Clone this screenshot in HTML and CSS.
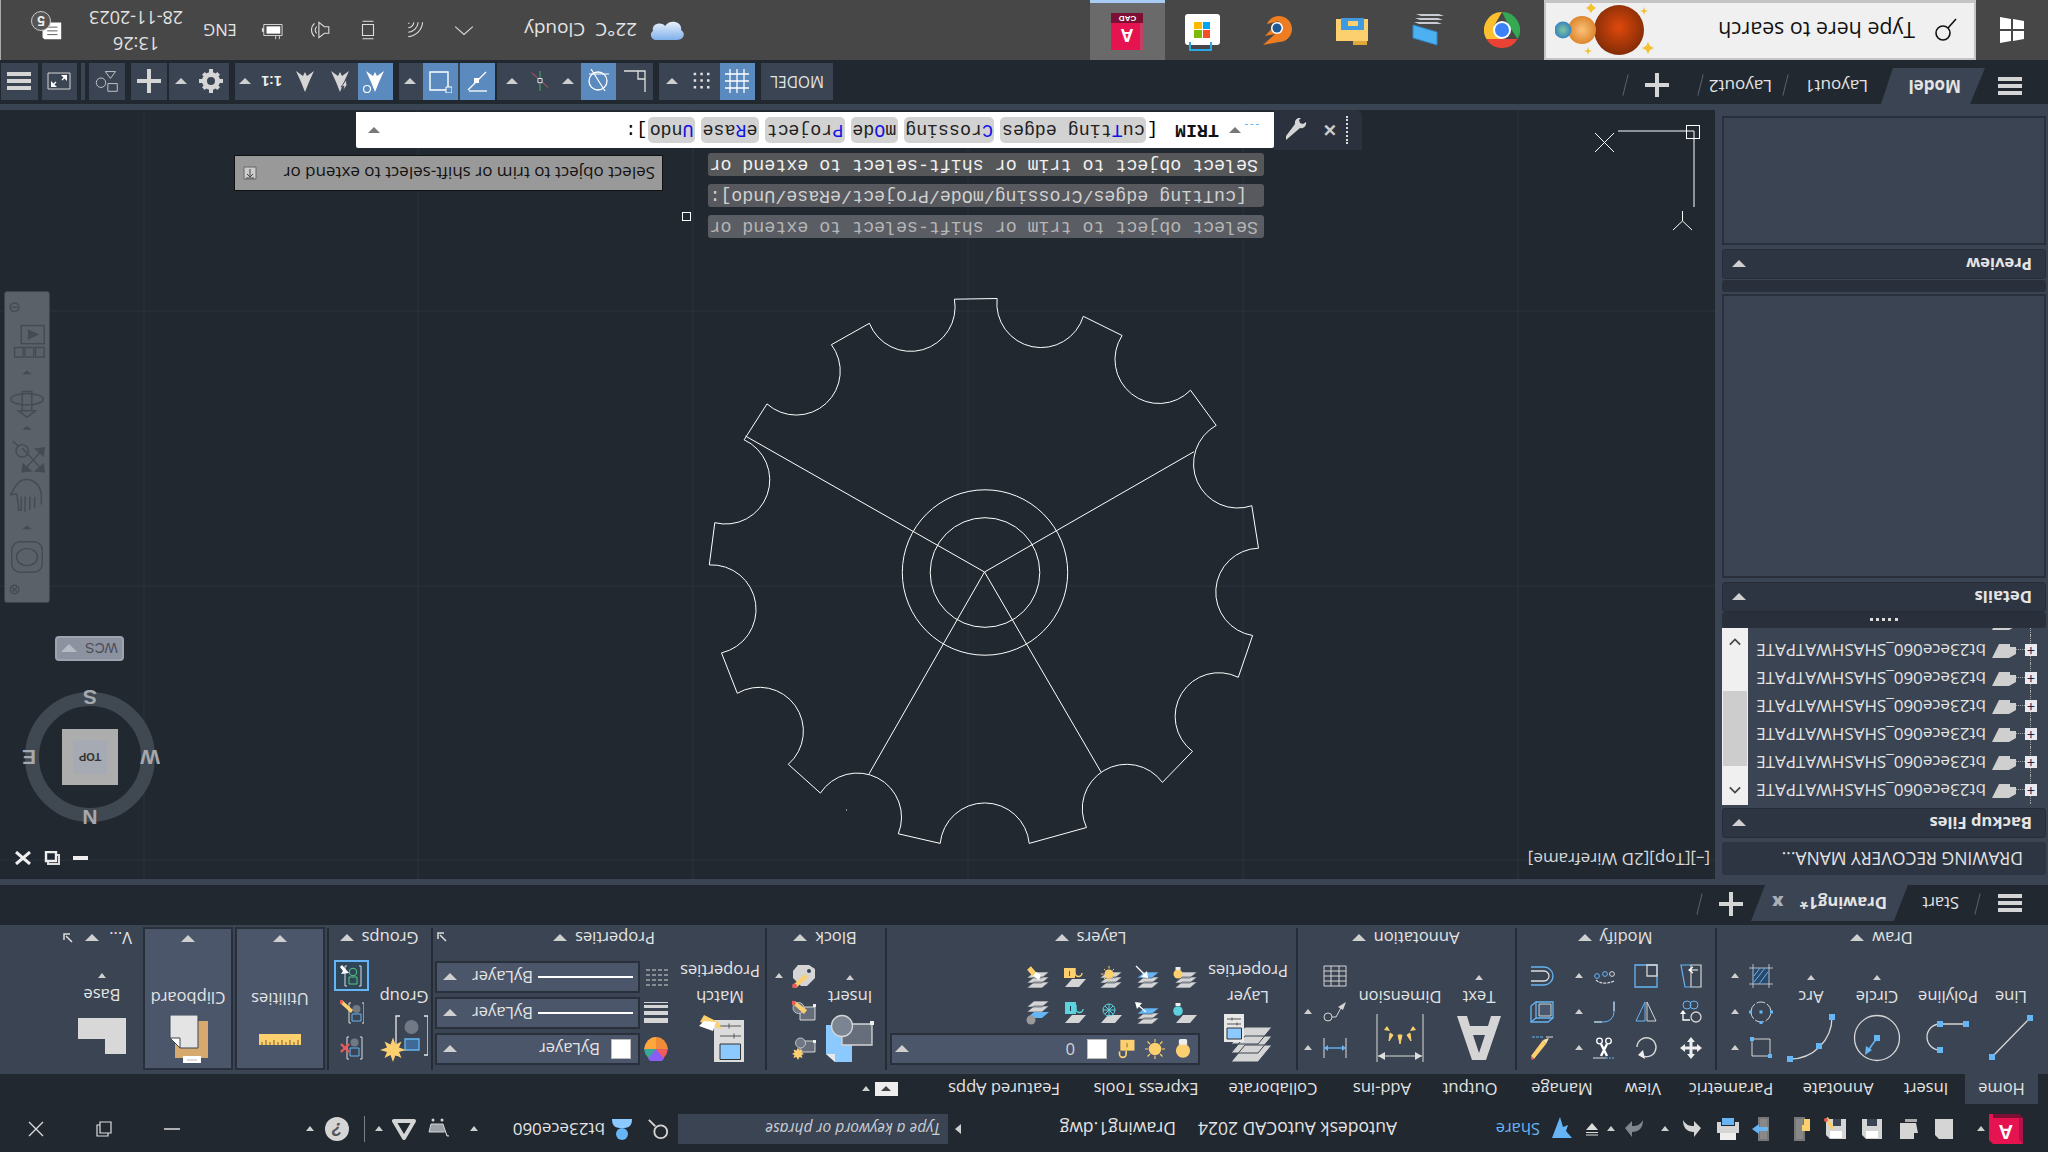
FILE: index.html
```html
<!DOCTYPE html>
<html lang="en">
<head>
<meta charset="utf-8">
<title>Autodesk AutoCAD 2024 - Drawing1.dwg</title>
<link rel="stylesheet" href="styles.css">
</head>
<body>
<svg class="defs" width="0" height="0">
  <defs>
    <radialGradient id="gBig" cx=".5" cy=".55" r=".6"><stop offset="0" stop-color="#e0480c"/><stop offset="1" stop-color="#7a2a06"/></radialGradient>
    <radialGradient id="gMid" cx=".5" cy=".5" r=".6"><stop offset="0" stop-color="#fbc27a"/><stop offset="1" stop-color="#d87a1e"/></radialGradient>
    <radialGradient id="gSmall" cx=".5" cy=".5" r=".6"><stop offset="0" stop-color="#7fc7a0"/><stop offset="1" stop-color="#2a77c4"/></radialGradient>
    <linearGradient id="gCloud" x1="0" y1="0" x2="0" y2="1"><stop offset="0" stop-color="#e8f1fb"/><stop offset="1" stop-color="#7fb0ea"/></linearGradient>
  </defs>
  <symbol id="line" viewBox="0 0 48 48"><path d="M5 44 43 5" stroke="#d5d5d5" stroke-width="1.300" fill="none"/><path d="M2 41h6v6H2zM40 2h6v6h-6z" fill="#66b5f5"/></symbol>
  <symbol id="poly" viewBox="0 0 48 48"><path d="M6 38H32A13 13 0 0 0 32 12" stroke="#d5d5d5" stroke-width="1.300" fill="none"/><path d="M3 35h6v6H3zM29 35h6v6h-6zM29 9h6v6h-6z" fill="#66b5f5"/></symbol>
  <symbol id="circ" viewBox="0 0 48 48"><circle cx="24" cy="24" r="22.500" stroke="#d5d5d5" stroke-width="1.300" fill="none"/><path d="M24 24 34 10" stroke="#66b5f5" stroke-width="1.500"/><path d="M21 21h6v6h-6z" fill="#66b5f5"/><path d="M36 7l-1 9-6-4z" fill="#66b5f5"/></symbol>
  <symbol id="arc" viewBox="0 0 48 48"><path d="M3 45A42 42 0 0 1 45 3" stroke="#d5d5d5" stroke-width="1.300" fill="none"/><path d="M0 42h6v6H0zM13 13h6v6h-6zM42 0h6v6h-6z" fill="#66b5f5"/></symbol>
  <symbol id="rect" viewBox="0 0 24 24"><path d="M3 4H21V21H3z" stroke="#d5d5d5" fill="none"/><path d="M1 2h4v4H1zM19 19h4v4h-4z" fill="#66b5f5"/></symbol>
  <symbol id="ell" viewBox="0 0 24 24"><circle cx="12" cy="12" r="10" stroke="#d5d5d5" fill="none" stroke-dasharray="9 2"/><path d="M10.500 10.500h3v3h-3zM10.500 0h3v3h-3zM21 10.500h3v3h-3zM0 10.500h3v3H0z" fill="#66b5f5"/></symbol>
  <symbol id="hatch" viewBox="0 0 24 24"><path d="M3 3H21V21H3z" fill="#29486a"/><path d="M0 4H24M0 20H24M4 0V24M20 0V24" stroke="#d5d5d5" stroke-width=".8"/><path d="M5 16 14 4M8 20 19 6M13 20 19 12" stroke="#66b5f5"/></symbol>
  <symbol id="move" viewBox="0 0 24 24"><path d="M12 1 8 6h2.500v4.500H6V8L1 12l5 4v-2.500h4.500V18H8l4 5 4-5h-2.500v-4.500H18V16l5-4-5-4v2.500h-4.500V6H16z" fill="#eee"/></symbol>
  <symbol id="rot" viewBox="0 0 24 24"><path d="M17 5A9.500 9.500 0 1 0 21 13" stroke="#d5d5d5" stroke-width="1.400" fill="none"/><path d="M13 1 20 5 15 10z" fill="#eee"/></symbol>
  <symbol id="trim" viewBox="0 0 24 24"><path d="M2 2H10" stroke="#66b5f5" stroke-dasharray="2 1"/><path d="M10 2H23" stroke="#ddd"/><path d="M9 4 15 16M15 4 9 16" stroke="#fff" stroke-width="2.400"/><circle cx="7.500" cy="19" r="2.800" fill="none" stroke="#fff" stroke-width="1.300"/><circle cx="16.500" cy="19" r="2.800" fill="none" stroke="#fff" stroke-width="1.300"/></symbol>
  <symbol id="erase" viewBox="0 0 24 24"><path d="M20 1 8 16l3 4L23 4z" fill="#fcd06f"/><path d="M8 16 5 22l6-2z" fill="#fbe2a8"/><path d="M23 1a2 2 0 0 0-3 0L23 4z" fill="#ea5a5a"/><path d="M1 23H8" stroke="#ddd"/><path d="M11 23H23" stroke="#66b5f5" stroke-dasharray="3 1"/></symbol>
  <symbol id="copy" viewBox="0 0 24 24"><circle cx="7" cy="7" r="5" fill="none" stroke="#d5d5d5" stroke-width="1.300"/><path d="M13 4H20V10" stroke="#fff" stroke-width="1.300" fill="none"/><path d="M17 10h6l-3 4z" fill="#fff"/><circle cx="9" cy="19" r="4" fill="none" stroke="#66b5f5"/><circle cx="16" cy="19" r="4" fill="none" stroke="#66b5f5"/></symbol>
  <symbol id="mirror" viewBox="0 0 24 24"><path d="M11 3H2L11 22z" fill="none" stroke="#d5d5d5"/><path d="M13 3H22L13 22z" fill="none" stroke="#66b5f5"/></symbol>
  <symbol id="fillet" viewBox="0 0 24 24"><path d="M22 2H12A10 10 0 0 0 2 12V23" stroke="#66b5f5" fill="none"/><path d="M22 2H14M2 22V13" stroke="#ddd"/></symbol>
  <symbol id="array3d" viewBox="0 0 24 24"><path d="M1 6 6 2H23V18L18 22H1z" fill="none" stroke="#66b5f5" stroke-width="1.300"/><path d="M18 22V6H1M18 6 23 2" stroke="#66b5f5" stroke-width="1.300" fill="none"/><path d="M3 8H15V20H3z" fill="#49586c" stroke="#d5d5d5"/></symbol>
  <symbol id="stretch" viewBox="0 0 24 24"><path d="M2 1H12V23H2z" fill="none" stroke="#d5d5d5" stroke-width="1.200"/><path d="M12 1H18L22 23H12" fill="none" stroke="#66b5f5" stroke-width="1.200"/><path d="M5 18H13M10 15l4 3-4 3" stroke="#fff" fill="none" stroke-width="1.200"/></symbol>
  <symbol id="scale" viewBox="0 0 24 24"><path d="M1 1H23V23H1z" fill="none" stroke="#66b5f5" stroke-width="1.300"/><path d="M11 12H1V23H11z" fill="none" stroke="#d5d5d5" stroke-width="1.300"/></symbol>
  <symbol id="array" viewBox="0 0 24 24"><path d="M2 7C8 4 16 4 20 8" stroke="#d5d5d5" stroke-width="1.200" fill="none" stroke-dasharray="3 1"/><circle cx="4" cy="14" r="2.400" fill="none" stroke="#d5d5d5"/><circle cx="11" cy="14" r="2.400" fill="none" stroke="#66b5f5"/><circle cx="19" cy="12" r="2.400" fill="none" stroke="#66b5f5"/></symbol>
  <symbol id="offset" viewBox="0 0 24 24"><path d="M23 7H10A5 5 0 0 0 10 17H23" stroke="#ddd" stroke-width="1.300" fill="none"/><path d="M23 3H10A9 9 0 0 0 10 21H23" stroke="#66b5f5" stroke-width="1.300" fill="none"/></symbol>
  <symbol id="bigA" viewBox="0 0 48 48"><path d="M17 2H31L46 46H36L33 36H15L12 46H2zM18 27H30L24 9z" fill="#d5d5d5" fill-rule="evenodd"/></symbol>
  <symbol id="dim" viewBox="0 0 48 48"><path d="M1 0V48M47 0V48M2 6H46" stroke="#ddd" fill="none"/><path d="M2 6l7-4v8zM46 6l-7-4v8z" fill="#ddd"/><path d="M24 18l-2 9h4zM13 21l1 8 3-2zM35 21l-1 8-3-2z" fill="#fcd06f" stroke="#fcd06f"/><path d="M8 32l6-1-3 5zM40 32l-6-1 3 5z" fill="#fcd06f"/></symbol>
  <symbol id="dimS" viewBox="0 0 24 24"><path d="M1 2V22M23 2V22" stroke="#ddd"/><path d="M3 12H21" stroke="#66b5f5" stroke-width="1.400"/><path d="M1 12l4-3v6zM23 12l-4-3v6z" fill="#66b5f5"/></symbol>
  <symbol id="lead" viewBox="0 0 24 24"><circle cx="19" cy="7" r="4" fill="none" stroke="#d5d5d5"/><path d="M15 7H11L5 18" fill="none" stroke="#d5d5d5"/><path d="M1 22l3-8 5 3z" fill="#d5d5d5"/></symbol>
  <symbol id="table" viewBox="0 0 24 24"><path d="M1 2H23V22H1zM1 7H23M1 12H23M1 17H23M8 2V22M16 2V22" fill="none" stroke="#d5d5d5"/></symbol>
  <symbol id="layerprop" viewBox="0 0 48 48"><path d="M14 0H41L27 17H0zM14 9H41L27 26H0zM14 18H41L27 35H0z" fill="#d5d5d5" stroke="#3b4453"/><path d="M28 20H48V48H28z" fill="#e8e8e8"/><path d="M30.500 23H45V34H30.500z" fill="#8cc9ff" stroke="#333"/><path d="M31 38H45M31 43H45M35 36.500v3M40 41.500v3" stroke="#555"/></symbol>
  <symbol id="bulbY" viewBox="0 0 24 24"><circle cx="12" cy="10" r="8.500" fill="#fcd06f"/><path d="M7 17h10v5a2 2 0 0 1-2 2H9a2 2 0 0 1-2-2z" fill="#eee"/></symbol>
  <symbol id="sunY" viewBox="0 0 24 24"><circle cx="12" cy="12" r="7.500" fill="#fcd06f"/><path d="M12 0V4M12 20V24M0 12H4M20 12H24M3 3 6 6M18 18 21 21M3 21 6 18M18 6 21 3" stroke="#fcd06f" stroke-width="1.300"/></symbol>
  <symbol id="lockY" viewBox="0 0 24 24"><path d="M3 10h17v13H3z" fill="#fcd06f"/><path d="M12 14v5" stroke="#7a5c22"/><path d="M13 10V6a4 4 0 0 1 8 0v3" fill="none" stroke="#fcd06f" stroke-width="2"/></symbol>
  <symbol id="lays" viewBox="0 0 24 24"><path d="M7 1H22L15 7H0zM7 6H22L15 12H0zM7 11H22L15 17H0z" fill="#d5d5d5" stroke="#3b4453" stroke-width=".6"/></symbol>
  <symbol id="plate" viewBox="0 0 24 24"><path d="M7 2H21L14 10H0z" fill="#d5d5d5"/></symbol>
  <symbol id="l1" viewBox="0 0 24 24"><use href="#lays" width="24" height="24"/><circle cx="19" cy="15" r="4.500" fill="#fcd06f"/><path d="M16.500 19h5v3h-5z" fill="#eee"/></symbol>
  <symbol id="l2" viewBox="0 0 24 24"><path d="M7 1H22L15 7H0zM7 6H22L15 12H0z" fill="#d5d5d5" stroke="#3b4453" stroke-width=".6"/><path d="M7 11H22L15 17H0z" fill="#66b5f5" stroke="#3b4453" stroke-width=".6"/><path d="M23 23 15 15" stroke="#fff" stroke-width="1.200"/><path d="M11 11l7 1-6 6z" fill="#fff"/></symbol>
  <symbol id="l3" viewBox="0 0 24 24"><use href="#lays" width="24" height="24"/><circle cx="13" cy="15" r="4.500" fill="#fcd06f"/><path d="M13 7.500V9.500M13 20.500V23M5.500 15H7.500M18.500 15H21M8 10 9.500 11.500M16.500 18.500 18 20M8 20 9.500 18.500M16.500 11.500 18 10" stroke="#fcd06f"/></symbol>
  <symbol id="l4" viewBox="0 0 24 24"><use href="#plate" width="24" height="24"/><path d="M11 11h11v10H11z" fill="#fcd06f"/><path d="M16.500 13v5" stroke="#7a5c22"/><path d="M4 14a3.500 3.500 0 0 1 7 0v5" fill="none" stroke="#fcd06f" stroke-width="1.400" transform="translate(0 2)"/></symbol>
  <symbol id="l5" viewBox="0 0 24 24"><use href="#lays" width="24" height="24"/><path d="M14 14 20 21" stroke="#fcd06f" stroke-width="5"/><path d="M10 9l6 4-3 4-5-3z" fill="#fff"/></symbol>
  <symbol id="m1" viewBox="0 0 24 24"><use href="#plate" width="24" height="24"/><circle cx="19" cy="14" r="4.800" fill="#5cd2dc"/><path d="M16.500 19h5v3h-5z" fill="#eee"/></symbol>
  <symbol id="m2" viewBox="0 0 24 24"><path d="M7 1H22L15 7H0zM7 6H22L15 12H0z" fill="#d5d5d5" stroke="#3b4453" stroke-width=".6"/><path d="M7 11H22L15 17H0z" fill="#66b5f5" stroke="#3b4453" stroke-width=".6"/><path d="M13 13 21 20" stroke="#fff" stroke-width="1.200"/><path d="M24 23l-7-1 5-6z" fill="#fff"/></symbol>
  <symbol id="m3" viewBox="0 0 24 24"><use href="#plate" width="24" height="24"/><circle cx="13" cy="15" r="6" fill="none" stroke="#5cd2dc"/><path d="M7 15H19M13 9V21M9 11 17 19M9 19 17 11" stroke="#5cd2dc"/></symbol>
  <symbol id="m4" viewBox="0 0 24 24"><use href="#plate" width="24" height="24"/><path d="M10 11h11v12H10z" fill="#5cd2dc"/><path d="M15.500 14v5" stroke="#234"/><path d="M3 16a3.500 3.500 0 0 1 7 0v4" fill="none" stroke="#5cd2dc" stroke-width="1.400"/></symbol>
  <symbol id="m5" viewBox="0 0 24 24"><path d="M7 13H22L15 19H0zM7 18H22L15 24H0z" fill="#d5d5d5" stroke="#3b4453" stroke-width=".6"/><path d="M7 7H22L15 13H0z" fill="#66b5f5"/><circle cx="18" cy="5" r="4.500" fill="#999"/></symbol>
  <symbol id="insert" viewBox="0 0 48 48"><path d="M22 0H39L48 8V37H22z" fill="#8cc9ff"/><path d="M39 0 48 8H39z" fill="#e8e8e8"/><path d="M2 17H32V38H2z" fill="#666e7c" stroke="#d5d5d5" stroke-width="1.300"/><circle cx="32" cy="36" r="10.500" fill="#7b8492" stroke="#d5d5d5" stroke-width="1.300"/><path d="M0 37h4v4H0z" fill="#eee"/></symbol>
  <symbol id="bl1" viewBox="0 0 24 24"><path d="M1 8H16V19H1z" fill="#666e7c" stroke="#d5d5d5"/><circle cx="15.500" cy="17" r="5" fill="#6f7784" stroke="#d5d5d5" stroke-width=".8"/><path d="M18 0l1.500 3 3-1-1 3 2.500 1-2.500 1.500 1 3-3-1-1.500 3-1.500-3-3 1 1-3L12 6l2.500-1-1-3 3 1z" fill="#fcd06f"/><path d="M0 17h3v3H0z" fill="#eee"/></symbol>
  <symbol id="bl2" viewBox="0 0 24 24"><path d="M1 4H16V17H1z" fill="#666e7c" stroke="#d5d5d5"/><circle cx="17.500" cy="16" r="5.500" fill="#6f7784" stroke="#d5d5d5" stroke-width=".8"/><path d="M9 23 13 24 22 14 18 11z" fill="#fcd06f" transform="rotate(-90 15 17)"/><circle cx="22.500" cy="21" r="2.300" fill="#ea5a5a"/><path d="M0 17h3v3H0z" fill="#eee"/></symbol>
  <symbol id="bl3" viewBox="0 0 24 24"><path d="M9 2 1 10V19L7 23H18L23 17V10L15 2z" fill="#d5d5d5"/><path d="M20 0 8 11l3 3L23 3z" fill="#fcd06f"/><circle cx="21.500" cy="2" r="2.400" fill="#ea5a5a"/><circle cx="7" cy="17" r="2" fill="#3b4453"/></symbol>
  <symbol id="match" viewBox="0 0 48 48"><path d="M0 0H30V42H0z" fill="#dcdcdc"/><path d="M3.500 2.500H24V18H3.500z" fill="#8cc9ff" stroke="#333"/><path d="M3 26H24M3 36H24M10 23.500v5M15 33.500v5" stroke="#555"/><path d="M22 33 26 40 40 47 44 40z" fill="#fcd06f"/><path d="M31 31 45 36 40 41 28 40z" fill="#fff"/></symbol>
  <symbol id="wheel" viewBox="0 0 24 24"><path d="M12 12V0A12 14 0 0 1 24 12z" fill="#3ba796"/><path d="M12 12H24A12 14 0 0 1 12 24z" fill="#ffa63d"/><path d="M12 12V24A12 14 0 0 1 0 12z" fill="#f08c39"/><path d="M12 12H0A12 14 0 0 1 12 0z" fill="#ee5c5c"/><path d="M12 12 4 2A12 14 0 0 1 20 2z" fill="#8b5cf6"/></symbol>
  <symbol id="lw" viewBox="0 0 24 24"><path d="M0 2H24V7H0zM0 10H24V14H0zM0 17H24V20H0zM0 22H24V23H0z" fill="#d5d5d5"/></symbol>
  <symbol id="lt" viewBox="0 0 24 24"><path d="M0 4H24M0 9H24M0 14H24M0 19H24" stroke="#d5d5d5" stroke-dasharray="4 2"/></symbol>
  <symbol id="group" viewBox="0 0 48 48"><path d="M4 7H0V46H4M28 7H32V46H28" fill="none" stroke="#e8e8e8" stroke-width="1.300"/><path d="M9 12H23V23H9z" fill="#3f6a96" stroke="#66b5f5" stroke-width="1.300"/><circle cx="16.500" cy="35" r="7" fill="#717986"/><path d="M35 0l2.500 7 6-3-2.500 6 7 2-7 2.500 2.500 6-6-3-2.500 7-2.500-7-6 3 2.500-6-7-2.500 7-2-2.500-6 6 3z" fill="#fcd06f"/></symbol>
  <symbol id="gp1" viewBox="0 0 24 24"><path d="M4 1H2V23H4M15 1H17V23H15" fill="none" stroke="#ddd"/><path d="M5 4H14V12H5z" fill="none" stroke="#66b5f5"/><circle cx="9.500" cy="17.500" r="4" fill="#717986"/><path d="M15 8 23 16M23 8 15 16" stroke="#ea5a5a" stroke-width="2.400"/></symbol>
  <symbol id="gp2" viewBox="0 0 24 24"><path d="M2 1H0V21H2M13 1H15V21H13" fill="none" stroke="#ddd"/><path d="M3 3H12V10H3z" fill="none" stroke="#66b5f5"/><circle cx="7.500" cy="15" r="4" fill="#717986"/><path d="M13 11 24 21l-2 3L11 14z" fill="#fcd06f"/><circle cx="23" cy="22" r="2" fill="#ea5a5a"/></symbol>
  <symbol id="gp3" viewBox="0 0 24 24"><path d="M5 2H3V22H5M17 2H19V22H17" fill="none" stroke="#ddd"/><path d="M7 4H15V11H7z" fill="none" stroke="#55c77d"/><circle cx="11" cy="16" r="3.800" fill="none" stroke="#55c77d"/><path d="M22 23 15 15l8-1-2 3 3 4z" fill="#fff"/></symbol>
  <symbol id="ruler" viewBox="0 0 42 11"><path d="M0 0H42V11H0z" fill="#fcd06f"/><path d="M3 0V5M7 0V3M11 0V5M15 0V3M19 0V5M23 0V3M27 0V5M31 0V3M35 0V5M39 0V3" stroke="#7a5c22"/></symbol>
  <symbol id="clip" viewBox="0 0 40 48"><path d="M0 5H33V42H0z" fill="#d6a96f"/><path d="M7 0H25V7H7z" fill="#fff"/><path d="M11 3H21" stroke="#bbb"/><path d="M10 15H28L38 25V48H10z" fill="#e4e4e4" stroke="#3b4453"/><path d="M28 15 38 25H28z" fill="#fff" stroke="#3b4453"/></symbol>
  <symbol id="base" viewBox="0 0 48 36"><path d="M0 0H21V15H48V36H0z" fill="#d8d8d8"/></symbol>
  <symbol id="ham" viewBox="0 0 24 20"><path d="M0 1H24V5H0zM0 8H24V12H0zM0 15H24V19H0z" fill="#d5d5d5"/></symbol>
  <symbol id="plus" viewBox="0 0 24 24"><path d="M10 0h4v10h10v4H14v10h-4V14H0v-4h10z" fill="#d5d5d5"/></symbol>
  <symbol id="grid" viewBox="0 0 24 24"><path d="M0 5H24M0 12H24M0 19H24M5 0V24M12 0V24M19 0V24" stroke="#fff" stroke-width="1.300"/></symbol>
  <symbol id="dots" viewBox="0 0 24 24"><path d="M3 3h3v3H3zM11 3h3v3h-3zM19 3h3v3h-3zM3 11h3v3H3zM11 11h3v3h-3zM19 11h3v3h-3zM3 19h3v3H3zM11 19h3v3h-3zM19 19h3v3h-3z" fill="#e0e0e0"/></symbol>
  <symbol id="corner" viewBox="0 0 24 24"><path d="M2 1V22H23" fill="none" stroke="#e0e0e0" stroke-width="1.300"/><path d="M2 14H9V22" fill="none" stroke="#e0e0e0" stroke-width="1.300"/></symbol>
  <symbol id="ring" viewBox="0 0 24 24"><circle cx="12" cy="12" r="9" fill="none" stroke="#fff" stroke-width="1.300"/><path d="M1 19 21 19M5 2 19 24" stroke="#fff" stroke-width="1.200" fill="none"/></symbol>
  <symbol id="tick" viewBox="0 0 24 24"><path d="M12 0V24" stroke="#49c06a"/><path d="M2 4 22 22" stroke="#e25a5a"/><path d="M9.500 10h5v5h-5z" fill="#3b4453" stroke="#fff"/></symbol>
  <symbol id="ortho" viewBox="0 0 24 24"><path d="M3 21 21 3" stroke="#fff" stroke-width="1.300"/><path d="M2 2H20" stroke="#fff" stroke-width="1.300"/><path d="M10 10h5v5h-5z" fill="#fff"/></symbol>
  <symbol id="box" viewBox="0 0 24 24"><path d="M4 3H22V21H4z" fill="none" stroke="#fff" stroke-width="1.400"/><path d="M0 0h6v6H0z" fill="#5b8abf" stroke="#fff"/></symbol>
  <symbol id="ann" viewBox="0 0 24 24"><path d="M12 1 16 11 21 22 14 17 12 21 10 17 3 22 8 11z" fill="#d5d5d5"/></symbol>
  <symbol id="ann2" viewBox="0 0 24 24"><path d="M12 1 16 11 21 22 14 17 12 21 10 17 3 22 8 11z" fill="#d5d5d5"/><path d="M5 8 9 2 8 7 11 6 6 13z" fill="#d5d5d5" stroke="#3b4453" stroke-width=".8"/></symbol>
  <symbol id="ann3" viewBox="0 0 24 24"><path d="M12 1 16 11 21 22 14 17 12 21 10 17 3 22 8 11z" fill="#fff"/><circle cx="20" cy="4" r="3.500" fill="none" stroke="#fff" stroke-width="1.200"/></symbol>
  <symbol id="gear" viewBox="0 0 24 24"><circle cx="12" cy="12" r="6.500" fill="none" stroke="#d5d5d5" stroke-width="5"/><path d="M10 0h4v4h-4zM10 20h4v4h-4zM0 10h4v4H0zM20 10h4v4h-4zM3 5.800 5.800 3 8 5.200 5.200 8zM18.200 21 21 18.200 18.800 16 16 18.800zM3 18.200 5.800 21 8 18.800 5.200 16zM18.200 3 21 5.800 18.800 8 16 5.200z" fill="#d5d5d5"/></symbol>
  <symbol id="units" viewBox="6 0 28 28"><path d="M16 17 22 25H10z" fill="none" stroke="#d5d5d5"/><circle cx="27" cy="12" r="5.500" fill="none" stroke="#d5d5d5"/><path d="M8 2H19V11H8z" fill="none" stroke="#d5d5d5"/></symbol>
  <symbol id="expand" viewBox="0 0 24 24"><path d="M1 4H23V20H1z" fill="none" stroke="#d5d5d5"/><path d="M5 17 9 13M19 7 15 11" stroke="#fff" stroke-width="1.300"/><path d="M4 12v6h6zM20 12V6h-6z" fill="#fff"/></symbol>
</svg>

<div class="app">

  <header class="titlebar">
    <span class="logo-slot"><svg class="logo" viewBox="0 0 34 30"><path d="M0 0H30L34 4V30H4z" fill="#e5134f"/><path d="M0 0 4 4V30L0 26z" fill="#b2124a"/><path d="M0 26h30v4H4z" fill="#7b0f34"/></svg><span class="logo-a">A</span></span>
    <i class="caret s16 first"></i>
    <div class="qat">
      <svg class="q" viewBox="0 0 24 24"><path d="M3 2H17L21 6V22H3z" fill="#d5d5d5"/></svg>
      <svg class="q" viewBox="0 0 24 24"><path d="M6 2H20V18H4L2 8H6z" fill="#d5d5d5"/><path d="M3 22h12v-3H3z" fill="#aaa"/></svg>
      <svg class="q" viewBox="0 0 24 24"><path d="M2 2H18L22 6V22H2z" fill="#d5d5d5"/><path d="M6 3h12v7H6z" fill="#fff"/><path d="M7 15h10v7H7z" fill="#3b4453"/></svg>
      <svg class="q" viewBox="0 0 24 24"><path d="M2 2H18L22 6V22H2z" fill="#d5d5d5"/><path d="M6 3h12v7H6z" fill="#fff"/><path d="M7 15h8v7H7z" fill="#3b4453"/><path d="M20 24 14 13l3-2 6 11z" fill="#fcd06f"/><circle cx="22" cy="21" r="2" fill="#ea5a5a"/></svg>
      <svg class="q" viewBox="0 0 24 24"><path d="M7 0H18V24H7z" fill="#777"/><path d="M9 2h7v20H9z" fill="#888"/><path d="M2 10h8v6H2z" fill="#fcd06f"/><path d="M2 14h6v8H2z" fill="#fcd06f"/></svg>
      <svg class="q" viewBox="0 0 24 24"><path d="M7 0H18V24H7z" fill="#777"/><path d="M9 2h7v20H9z" fill="#888"/><path d="M0 12l7-5v3h9v4H7v3z" fill="#66b5f5" transform="translate(24 0) scale(-1 1)"/></svg>
      <svg class="q" viewBox="0 0 24 24"><path d="M4 1H20V8H4z" fill="#eee"/><path d="M1 8H23V19H19V15H5V19H1z" fill="#d5d5d5"/><path d="M6 16H18V23H6z" fill="#66b5f5"/></svg>
      <svg class="q" viewBox="0 0 24 24"><path d="M3 13 10 4V9C17 9 21 13 21 21 18 16 15 15 10 15V20z" fill="#d5d5d5"/></svg>
    </div>
    <i class="caret s18"></i>
    <svg class="q w36" viewBox="0 0 24 24"><path d="M21 13 14 4V9C7 9 3 13 3 21 6 16 9 15 14 15V20z" fill="#7f8690"/></svg>
    <i class="caret s16"></i>
    <span class="ddn"><svg viewBox="0 0 14 14"><path d="M1 1H13M1 3.500H13" stroke="#ddd"/><path d="M1 6H13L7 13z" fill="#ddd"/></svg></span>
    <svg class="q w32" viewBox="0 0 24 24"><path d="M2 3 22 3 14 24 11 14 6 16 8 10z" fill="#66b5f5"/></svg>
    <span class="share">Share</span>
    <span class="app-name">Autodesk AutoCAD 2024</span>
    <span class="doc-name">Drawing1.dwg</span>
    <i class="tri-r"></i>
    <span class="search-cad">Type a keyword or phrase</span>
    <svg class="tool binoc" viewBox="0 0 24 24"><circle cx="9" cy="9" r="7" fill="none" stroke="#d5d5d5" stroke-width="2"/><path d="M15 15 22 22" stroke="#d5d5d5" stroke-width="2"/></svg>
    <svg class="tool user" viewBox="0 0 24 24"><circle cx="12" cy="7" r="6" fill="#66b5f5"/><path d="M2 22C2 14 6 13 12 13S22 14 22 22z" fill="#8cc9ff"/></svg>
    <span class="username">bt23ece060</span>
    <i class="caret m-user"></i>
    <svg class="tool cart" viewBox="0 0 24 24"><path d="M2 5H4L8 17H20L22 9H7" fill="#9aa0a8" stroke="#d5d5d5"/><circle cx="9" cy="21" r="1.500" fill="#d5d5d5"/><circle cx="18" cy="21" r="1.500" fill="#d5d5d5"/></svg>
    <svg class="tool tri" viewBox="0 0 24 24"><path d="M12 3 22 20H2z" fill="none" stroke="#d5d5d5" stroke-width="4" stroke-linejoin="round"/></svg>
    <i class="caret s14"></i>
    <span class="vsep"></span>
    <span class="help">?</span>
    <i class="caret m-help"></i>
    <div class="winctl">
      <svg viewBox="0 0 16 16"><path d="M0 8H16" stroke="#ddd" stroke-width="1.500"/></svg>
      <svg viewBox="0 0 16 16"><path d="M1 4H12V15H1zM4 4V1H15V12H12" fill="none" stroke="#ddd" stroke-width="1.200"/></svg>
      <svg viewBox="0 0 16 16"><path d="M1 1 15 15M15 1 1 15" stroke="#ddd" stroke-width="1.300"/></svg>
    </div>
  </header>

  <nav class="ribtabs">
    <span class="rt on">Home</span><span class="rt t-ins">Insert</span><span class="rt t-ann">Annotate</span><span class="rt t-par">Parametric</span><span class="rt t-view">View</span><span class="rt t-man">Manage</span><span class="rt t-out">Output</span><span class="rt t-add">Add-ins</span><span class="rt t-col">Collaborate</span><span class="rt t-exp">Express Tools</span><span class="rt t-feat">Featured Apps</span>
    <span class="rt-more"><i class="caret dark"></i></span><i class="caret s14"></i>
  </nav>

  <section class="ribbon">
    <div class="panel p-draw">
      <div class="pbody">
        <div class="big w64"><svg class="i48"><use href="#line"/></svg><span class="lb">Line</span></div>
        <div class="big w62"><svg class="i48"><use href="#poly"/></svg><span class="lb">Polyline</span></div>
        <div class="big w80"><svg class="i48"><use href="#circ"/></svg><span class="lb">Circle</span><i class="caret sm"></i></div>
        <div class="big w52"><svg class="i48"><use href="#arc"/></svg><span class="lb">Arc</span><i class="caret sm"></i></div>
        <div class="tools cols-draw">
          <svg class="i24"><use href="#rect"/></svg><i class="caret sm"></i>
          <svg class="i24"><use href="#ell"/></svg><i class="caret sm"></i>
          <svg class="i24"><use href="#hatch"/></svg><i class="caret sm"></i>
        </div>
      </div>
      <div class="ptitle">Draw <i class="caret"></i></div>
    </div>
    <div class="panel p-mod">
      <div class="pbody">
        <div class="tools cols-mod">
          <svg class="i24"><use href="#move"/></svg><svg class="i24"><use href="#rot"/></svg><svg class="i24"><use href="#trim"/></svg><i class="caret sm"></i><svg class="i24"><use href="#erase"/></svg>
          <svg class="i24"><use href="#copy"/></svg><svg class="i24"><use href="#mirror"/></svg><svg class="i24"><use href="#fillet"/></svg><i class="caret sm"></i><svg class="i24"><use href="#array3d"/></svg>
          <svg class="i24"><use href="#stretch"/></svg><svg class="i24"><use href="#scale"/></svg><svg class="i24"><use href="#array"/></svg><i class="caret sm"></i><svg class="i24"><use href="#offset"/></svg>
        </div>
      </div>
      <div class="ptitle">Modify <i class="caret"></i></div>
    </div>
    <div class="panel p-ann">
      <div class="pbody">
        <div class="big w72"><svg class="i48"><use href="#bigA"/></svg><span class="lb">Text</span><i class="caret sm"></i></div>
        <div class="big w86"><svg class="i48"><use href="#dim"/></svg><span class="lb">Dimension</span></div>
        <div class="tools cols-ann">
          <svg class="i24"><use href="#dimS"/></svg><i class="caret sm"></i>
          <svg class="i24"><use href="#lead"/></svg><i class="caret sm"></i>
          <svg class="i24"><use href="#table"/></svg><span></span>
        </div>
      </div>
      <div class="ptitle">Annotation <i class="caret"></i></div>
    </div>
    <div class="panel p-lay">
      <div class="pbody">
        <div class="big w96"><svg class="i48"><use href="#layerprop"/></svg><span class="lb two">Layer<br>Properties</span></div>
        <div class="lay-right">
          <div class="combo c-layer">
            <svg class="i20"><use href="#bulbY"/></svg><svg class="i20"><use href="#sunY"/></svg><svg class="i20"><use href="#lockY"/></svg><span class="swatch"></span><span class="ztxt">0</span><i class="caret push"></i>
          </div>
          <div class="tools cols-lay">
            <svg class="i24"><use href="#m1"/></svg><svg class="i24"><use href="#m2"/></svg><svg class="i24"><use href="#m3"/></svg><svg class="i24"><use href="#m4"/></svg><svg class="i24"><use href="#m5"/></svg>
            <svg class="i24"><use href="#l1"/></svg><svg class="i24"><use href="#l2"/></svg><svg class="i24"><use href="#l3"/></svg><svg class="i24"><use href="#l4"/></svg><svg class="i24"><use href="#l5"/></svg>
          </div>
        </div>
      </div>
      <div class="ptitle">Layers <i class="caret"></i></div>
    </div>
    <div class="panel p-block">
      <div class="pbody">
        <div class="big w70"><svg class="i48"><use href="#insert"/></svg><span class="lb">Insert</span><i class="caret sm"></i></div>
        <div class="tools cols-block">
          <svg class="i24"><use href="#bl1"/></svg><span></span>
          <svg class="i24"><use href="#bl2"/></svg><span></span>
          <svg class="i24"><use href="#bl3"/></svg><i class="caret sm"></i>
        </div>
      </div>
      <div class="ptitle">Block <i class="caret"></i></div>
    </div>
    <div class="panel p-prop">
      <div class="pbody">
        <div class="big w90"><svg class="i48"><use href="#match"/></svg><span class="lb two">Match<br>Properties</span></div>
        <div class="prop-rows">
          <div class="prow"><svg class="i24"><use href="#wheel"/></svg><div class="combo c-prop"><span class="swatch sm"></span><span class="ctxt">ByLayer</span><i class="caret push"></i></div></div>
          <div class="prow"><svg class="i24"><use href="#lw"/></svg><div class="combo c-prop"><span class="lnw"></span><span class="ctxt">ByLayer</span><i class="caret push"></i></div></div>
          <div class="prow"><svg class="i24"><use href="#lt"/></svg><div class="combo c-prop"><span class="lnw"></span><span class="ctxt">ByLayer</span><i class="caret push"></i></div></div>
        </div>
      </div>
      <div class="ptitle t-prop">Properties <i class="caret"></i><svg class="launch" viewBox="0 0 10 10"><path d="M1 1 7 7M9 3V9H3" fill="none" stroke="#ddd" stroke-width="1.500"/></svg></div>
    </div>
    <div class="panel p-grp">
      <div class="pbody">
        <div class="big w54"><svg class="i48"><use href="#group"/></svg><span class="lb">Group</span></div>
        <div class="tools cols-grp">
          <svg class="i24"><use href="#gp1"/></svg>
          <svg class="i24"><use href="#gp2"/></svg>
          <span class="gactive"><svg class="i24"><use href="#gp3"/></svg></span>
        </div>
      </div>
      <div class="ptitle">Groups <i class="caret"></i></div>
    </div>
    <div class="collapsed c-util"><svg class="ruler"><use href="#ruler"/></svg><span class="lb">Utilities</span><i class="caret up-last"></i></div>
    <div class="collapsed c-clip"><svg class="clipico"><use href="#clip"/></svg><span class="lb">Clipboard</span><i class="caret up-last"></i></div>
    <div class="panel p-view">
      <div class="pbody">
        <div class="big w68"><svg class="baseico"><use href="#base"/></svg><span class="lb">Base</span><i class="caret sm"></i></div>
      </div>
      <div class="ptitle ptitle-left">V... <i class="caret"></i><svg class="launch" viewBox="0 0 10 10"><path d="M1 1 7 7M9 3V9H3" fill="none" stroke="#ddd" stroke-width="1.500"/></svg></div>
    </div>
  </section>

  <nav class="filetabs">
    <svg class="ham"><use href="#ham"/></svg>
    <span class="slash s-a"></span>
    <span class="ft">Start</span>
    <span class="ft on">Drawing1*<b class="x">x</b></span>
    <svg class="plus"><use href="#plus"/></svg>
    <span class="slash s-b"></span>
  </nav>
  <div class="bar"></div>

  <main class="work">
    <aside class="palette">
      <div class="pal-title">DRAWING RECOVERY MANA...</div>
      <div class="pal-head">Backup Files <i class="caret"></i></div>
      <div class="pal-list">
        <div class="rows">
          <div class="frow"><span class="tree">+</span><svg class="dwg" viewBox="0 0 24 16"><path d="M0 4 7 0H24L17 14H6V11H0z" fill="#cfcfcf"/></svg><span class="fn">bt23ece060_SHASHWATPATE</span></div>
          <div class="frow"><span class="tree">+</span><svg class="dwg" viewBox="0 0 24 16"><path d="M0 4 7 0H24L17 14H6V11H0z" fill="#cfcfcf"/></svg><span class="fn">bt23ece060_SHASHWATPATE</span></div>
          <div class="frow"><span class="tree">+</span><svg class="dwg" viewBox="0 0 24 16"><path d="M0 4 7 0H24L17 14H6V11H0z" fill="#cfcfcf"/></svg><span class="fn">bt23ece060_SHASHWATPATE</span></div>
          <div class="frow"><span class="tree">+</span><svg class="dwg" viewBox="0 0 24 16"><path d="M0 4 7 0H24L17 14H6V11H0z" fill="#cfcfcf"/></svg><span class="fn">bt23ece060_SHASHWATPATE</span></div>
          <div class="frow"><span class="tree">+</span><svg class="dwg" viewBox="0 0 24 16"><path d="M0 4 7 0H24L17 14H6V11H0z" fill="#cfcfcf"/></svg><span class="fn">bt23ece060_SHASHWATPATE</span></div>
          <div class="frow"><span class="tree">+</span><svg class="dwg" viewBox="0 0 24 16"><path d="M0 4 7 0H24L17 14H6V11H0z" fill="#cfcfcf"/></svg><span class="fn">bt23ece060_SHASHWATPATE</span></div>
          <div class="frow"><span class="tree">+</span><svg class="dwg" viewBox="0 0 24 16"><path d="M0 4 7 0H24L17 14H6V11H0z" fill="#cfcfcf"/></svg><span class="fn">bt23ece060_SHASHWATPATE</span></div>
        </div>
        <div class="scroll"><svg viewBox="0 0 14 8" class="chev"><path d="M1 7 7 1 13 7" fill="none" stroke="#444" stroke-width="2"/></svg><span class="thumb"></span><svg viewBox="0 0 14 8" class="chev"><path d="M1 1 7 7 13 1" fill="none" stroke="#444" stroke-width="2"/></svg></div>
      </div>
      <div class="splitter"><span class="sdots"></span></div>
      <div class="pal-head">Details <i class="caret"></i></div>
      <div class="pal-body b-det"></div>
      <div class="splitter s2"></div>
      <div class="pal-head">Preview <i class="caret"></i></div>
      <div class="pal-body b-pre"></div>
    </aside>

    <div class="canvas">
      <svg class="drawing" viewBox="0 110 1715 769" width="1715" height="769">
        <path class="gl" d="M144 110V879M418 110V879M693 110V879M968 110V879M1243 110V879M1518 110V879M0 311H1715M0 586H1715M0 860H1715"/>
        <path class="cad" d="M954.400 299.200 997.100 298.500A44.200 44.200 0 0 0 1083.300 316.300L1122.100 335.500A44 44 0 0 0 1190.500 390.200L1216.200 425.400A44.100 44.100 0 0 0 1251.800 505.700L1258.500 548.200A43.950 43.950 0 0 0 1252.600 635.500L1238.300 677.300A43.700 43.700 0 0 0 1192.500 751.300L1162.400 782.400A44.350 44.350 0 0 0 1086.500 827.500L1029.200 843.400A44.700 44.700 0 0 0 940.200 843.400L898.300 833.800A44.150 44.150 0 0 0 820.400 793.100L788.300 764.300A43.900 43.900 0 0 0 737.300 693.300L721.500 652.900A44.600 44.600 0 0 0 709.300 564.900L714.800 522.700A44.150 44.150 0 0 0 744.100 439.800L767 403.900A43.950 43.950 0 0 0 831.400 344.700L869.400 323.300A44.400 44.400 0 0 0 954.400 299.200Z"/>
        <circle class="cad" cx="985" cy="572.500" r="82.700"/>
        <circle class="cad" cx="985" cy="572.500" r="54.800"/>
        <path class="cad" d="M1194 451.700 984.500 572 745.600 436.100M984.500 572 869 773.900M984.500 572 1101 772"/>
        <path class="cad" d="M846 810h1"/>
        <path class="cad" d="M1618 131H1694V207M1595 133 1614 152M1614 133 1595 152M1682.500 211V221L1673 230M1682.500 221 1692 230"/>
        <rect class="cad" x="1686.500" y="125.500" width="13" height="13"/>
      </svg>

      <div class="winbtns">
        <svg class="wb" viewBox="0 0 18 14"><path d="M2 5H17V9H2z" fill="#eee"/></svg>
        <svg class="wb" viewBox="0 0 18 14"><path d="M2 1H13V10H2z" fill="none" stroke="#ddd" stroke-width="2"/><path d="M5 4H15V13H5z" fill="#212830" stroke="#eee" stroke-width="2.400"/></svg>
        <svg class="wb" viewBox="0 0 18 14"><path d="M2 1 16 13M16 1 2 13" stroke="#eee" stroke-width="3"/></svg>
      </div>
      <div class="vplabel">[–][Top][2D Wireframe]</div>

      <svg class="compass" viewBox="0 0 140 140">
        <circle cx="70" cy="70" r="58" fill="none" stroke="#404852" stroke-width="14"/>
        <rect x="42" y="42" width="56" height="56" fill="#adadad"/>
        <rect x="53" y="53" width="34" height="34" fill="#a6aab2"/>
        <text class="tt" x="70" y="74">TOP</text>
        <text class="cd" x="70" y="17">N</text>
        <text class="cd" x="70" y="137">S</text>
        <text class="cd" x="131" y="77">E</text>
        <text class="cd" x="10" y="77">W</text>
      </svg>
      <div class="wcs"><span>WCS</span><i class="caret hollow"></i></div>

      <svg class="navbar" viewBox="0 0 46 312">
        <g fill="none" stroke="#454b52" stroke-width="1.500">
          <circle cx="36" cy="7" r="4.500"/><path d="M33 4 39 10M39 4 33 10"/>
          <rect x="7" y="25" width="32" height="32" rx="9"/><ellipse cx="23" cy="41" rx="11" ry="9"/>
          <path d="M8 96V104C8 114 14 122 24 122 32 122 36 114 40 106L34 107 32 96V90H29V104M25 88V104M20 90V104M15 92V104"/>
          <path d="M5 130 28 155M5 155 28 130"/><path d="M5 130l9 1-8 7zM5 155l9-1-8-7zM28 130l-9 1 8 7z" fill="#454b52"/><circle cx="28" cy="152" r="6.500"/><path d="M32 157 38 162"/>
          <ellipse cx="23" cy="206" rx="17" ry="6"/><path d="M18 194H28V214H18z"/><path d="M14 194 23 187 32 194z"/>
          <rect x="5" y="250" width="9" height="10"/><rect x="16" y="250" width="9" height="10"/><rect x="27" y="250" width="9" height="10"/>
          <rect x="5" y="264" width="24" height="19"/>
          <circle cx="36" cy="302" r="4.500"/><path d="M33 302H39"/>
        </g>
        <path d="M18 70h10l-5 4zM18 174h10l-5 4zM18 232h10l-5 4z" fill="#454b52"/><path d="M22 268 10 273.500 22 279z" fill="#454b52"/>
      </svg>

      <div class="hist">
        <div class="hl dim">Select object to trim or shift-select to extend or</div>
        <div class="hl mid">[cuTting edges/Crossing/mOde/Project/eRase/Undo]:</div>
        <div class="hl hi">Select object to trim or shift-select to extend or</div>
      </div>

      <div class="cmd">
        <div class="grip">
          <span class="vdots"></span>
          <span class="cx">✕</span>
          <svg class="wrench" viewBox="0 0 24 24"><path d="M22 2 8 14a5 5 0 0 0-6 6l3-2 3 1 1 3-2 2a5 5 0 0 0 6-6L22 6z" fill="#d5d5d5"/></svg>
        </div>
        <div class="input">
          <span class="und"></span><i class="caret gray"></i><span class="trim">TRIM</span><span class="br">[</span>
          <span class="chip">cu<b>T</b>ting edges</span><span class="chip"><b>C</b>rossing</span><span class="chip">m<b>O</b>de</span><span class="chip"><b>P</b>roject</span><span class="chip">e<b>R</b>ase</span><span class="chip"><b>U</b>ndo</span><span class="br">]:</span>
          <i class="caret gray right-end"></i>
        </div>
      </div>

      <span class="cursor"></span>
      <div class="tip"><span>Select object to trim or shift-select to extend or</span><svg class="pin" viewBox="0 0 14 14"><path d="M1 1H13V13H1z" fill="#ccc" stroke="#666"/><path d="M7 3V11M4 8 7 11 10 8M3 12H11" transform="rotate(180 7 7)" fill="none" stroke="#444"/></svg></div>
    </div>
  </main>

  <div class="bar"></div>

  <div class="layoutbar">
    <svg class="ham"><use href="#ham"/></svg>
    <span class="lt on">Model</span>
    <span class="lt l1">Layout1</span>
    <span class="slash s-c"></span>
    <span class="lt l2">Layout2</span>
    <span class="slash s-d"></span>
    <svg class="plus l-plus"><use href="#plus"/></svg>
    <span class="slash s-e"></span>
    <div class="status">
      <span class="model">MODEL</span>
      <div class="sg g1"><span class="sb on"><svg class="i24"><use href="#grid"/></svg></span><span class="sb"><svg class="i20"><use href="#dots"/></svg></span><span class="sc"><i class="caret"></i></span></div>
      <div class="sg g2"><span class="sb"><svg class="i24"><use href="#corner"/></svg></span><span class="sb on m2"><svg class="i24"><use href="#ring"/></svg></span><span class="sc"><i class="caret"></i></span><span class="sb n30"><svg class="i20"><use href="#tick"/></svg></span><span class="sc"><i class="caret"></i></span></div>
      <div class="sg g3"><span class="sb on"><svg class="i24"><use href="#ortho"/></svg></span><span class="sb on m2"><svg class="i24"><use href="#box"/></svg></span><span class="sc"><i class="caret"></i></span></div>
      <div class="sg g4"><span class="sb on"><svg class="i24"><use href="#ann3"/></svg></span><span class="sb"><svg class="i24"><use href="#ann2"/></svg></span><span class="sb"><svg class="i24"><use href="#ann"/></svg></span><span class="sb n33"><span class="ratio">1:1</span></span><span class="sc n20"><i class="caret"></i></span></div>
      <div class="sg g5"><span class="sb"><svg class="i24"><use href="#gear"/></svg></span><span class="sc"><i class="caret"></i></span></div>
      <div class="sg g6 tight"><span class="sb"><svg class="i24"><use href="#plus"/></svg></span></div>
      <div class="sg g6"><span class="sb"><svg class="i24"><use href="#units"/></svg></span></div>
      <div class="sg thin"></div>
      <div class="sg g6 e"><span class="sb"><svg class="i24"><use href="#expand"/></svg></span></div>
      <div class="sg g7"><svg class="ham"><use href="#ham"/></svg></div>
    </div>
  </div>

  <footer class="taskbar">
    <svg class="winlogo" viewBox="0 0 26 26"><path d="M1 4 12 2V12H1zM14 2 25 0V12H14zM1 14H12V24L1 22zM14 14H25V26L14 24z" fill="#fff"/></svg>
    <div class="tsearch">
      <svg class="mag" viewBox="0 0 24 24"><circle cx="15" cy="9" r="7" fill="none" stroke="#111" stroke-width="1.600"/><path d="M10 14 2 23" stroke="#111" stroke-width="1.600"/></svg>
      <span class="ts-text">Type here to search</span>
      <svg class="planets" viewBox="0 0 100 56"><circle cx="36" cy="28" r="25" fill="url(#gBig)"/><circle cx="73" cy="28" r="14" fill="url(#gMid)"/><circle cx="92" cy="28" r="8.500" fill="url(#gSmall)"/><path d="M5 8l2-4 2 4 4 2-4 2-2 4-2-4-4-2zM62 48l2-3 2 3 3 2-3 2-2 3-2-3-3-2zM10 46l1-3 1 3 3 1-3 1-1 3-1-3-3-1zM66 6l1-3 1 3 3 1-3 1-1 3-1-3-3-1z" fill="#f2c233"/></svg>
    </div>
    <div class="tapp"><svg class="ta" viewBox="0 0 36 36"><path d="M2.400 9A18 18 0 0 1 33.600 9H18z" fill="#ea4335"/><path d="M18 36A18 18 0 0 1 2.400 9L11 22z" fill="#34a853"/><path d="M33.600 9A18 18 0 0 1 18 36L26 22 18 9z" fill="#fbc02d"/><circle cx="18" cy="18" r="9" fill="#fff"/><circle cx="18" cy="18" r="7" fill="#3b82f6"/></svg></div>
    <div class="tapp"><svg class="ta" viewBox="0 0 36 36"><path d="M32 23 8 16V3L32 10z" fill="#4db0f0" stroke="#2f86c8"/><path d="M3 24H26L31 26H8zM2 28H25L30 30H7zM1 32H24L29 34H6z" fill="#c6ccd2"/></svg></div>
    <div class="tapp"><svg class="ta" viewBox="0 0 36 36"><path d="M2 7H34V29H2z" fill="#fcd06f"/><path d="M3 3H17V7H3z" fill="#e0a838"/><path d="M6 18H29V30H6z" fill="#3f9ae0"/><path d="M12 22h10v5H12z" fill="#fcd06f"/></svg></div>
    <div class="tapp"><svg class="ta" viewBox="0 0 36 36"><path d="M32 3 16 6A13 13 0 1 0 28 24L16 27 30 12 20 14z" fill="#ed7d20"/><circle cx="18" cy="20" r="6" fill="#fff"/><circle cx="18" cy="20" r="4.500" fill="#1f5a94"/></svg></div>
    <div class="tapp"><span class="store"><span class="ms"><i class="r"></i><i class="g"></i><i class="b"></i><i class="y"></i></span></span></div>
    <div class="tapp on"><span class="cadico"><b class="cadtop">CAD</b><span class="logo-a lg">A</span></span></div>
    <svg class="weather" viewBox="0 0 36 24"><path d="M8 22C2 22 0 16 4 13 2 6 12 3 16 8 21 0 34 4 32 12 37 15 35 22 28 22z" transform="rotate(180 18 12)" fill="url(#gCloud)"/></svg>
    <span class="wtxt">22°C&nbsp; Cloudy</span>
    <div class="tray">
      <svg viewBox="0 0 20 20"><path d="M2 13 10 6 18 13" fill="none" stroke="#ddd"/></svg>
      <svg viewBox="0 0 20 20"><path d="M17 4A14 14 0 0 0 4 17M17 8A10 10 0 0 0 8 17M17 12A6 6 0 0 0 12 17M16 16h1" fill="none" stroke="#ddd"/></svg>
      <svg viewBox="0 0 20 20"><path d="M5 5H15V15H5z" fill="none" stroke="#ddd"/><path d="M5 2H15M5 18H15" stroke="#ddd"/></svg>
      <svg viewBox="0 0 20 20"><path d="M2 7H6L11 3V17L6 13H2z" fill="none" stroke="#ddd"/><path d="M13 7A4 4 0 0 1 13 13M15 4A8 8 0 0 1 15 16" fill="none" stroke="#ddd"/></svg>
      <svg viewBox="0 0 24 20"><path d="M1 4H21V16H1z" fill="none" stroke="#ddd"/><path d="M3 6H18V14H3z" fill="#fff"/><path d="M21 8h2v4h-2z" fill="#ddd"/><path d="M4 4V0M8 4V0" stroke="#ddd"/></svg>
      <span class="eng">ENG</span>
      <div class="clock"><span>13:26</span><span>28-11-2023</span></div>
      <div class="notif"><svg viewBox="0 0 30 32"><path d="M3 5H21L23 7V23H3z" fill="#fff"/><path d="M7 10H18M7 14H18M7 18H18" stroke="#555"/></svg><span class="badge">5</span></div>
    </div>
  </footer>
</div>
</body>
</html>
```

FILE: styles.css
```css
* { box-sizing: border-box; }
html, body { margin: 0; padding: 0; width: 2048px; height: 1152px; overflow: hidden; background: #212830; }
.defs { position: absolute; }
i { display: block; font-style: normal; }
.app {
  width: 2048px; height: 1152px; overflow: hidden;
  transform: rotate(180deg);
  display: flex; flex-direction: column;
  background: #212830; color: #e4e4e4;
  font: 16.5px/1.2 "Open Sans", "Noto Sans", sans-serif;
}
svg { display: block; flex: none; }

.caret { width: 0; height: 0; border-left: 7px solid transparent; border-right: 7px solid transparent; border-top: 7px solid #cfcfcf; flex: none; }
.caret.sm { border-left-width: 4.5px; border-right-width: 4.5px; border-top-width: 5px; }
.caret.dark { border-top-color: #444; border-left-width: 5px; border-right-width: 5px; border-top-width: 5px; }
.caret.gray { border-top-color: #777; }
.caret.push { margin-left: auto; margin-right: 1px; }
.caret.hollow { border-top-color: #b7bbc6; border-left-width: 8px; border-right-width: 8px; border-top-width: 8px; }

/* title bar */
.titlebar { height: 48px; display: flex; align-items: center; padding: 0 0 2px 25px; flex: none; background: #212830; }
.logo-slot { position: relative; width: 34px; height: 30px; }
.logo { width: 34px; height: 30px; }
.logo-a { position: absolute; left: 10px; top: 0; font: 700 20px/24px "Liberation Sans", sans-serif; color: #fff; }
.caret.s16 { margin: 0 1px; border-left-width: 4px; border-right-width: 4px; border-top-width: 5px; width: 8px; }
.caret.s18, .caret.s14 { border-left-width: 4px; border-right-width: 4px; border-top-width: 5px; }
.caret.first { margin: 0 4px; }
.qat { display: flex; margin-left: 11px; }
.q { width: 24px; height: 24px; margin: 0 6px; }
.q.w36 { margin: 0 6px 0 10px; }
.q.w32 { margin: 0 4px; }
.ddn { width: 14px; height: 14px; margin: 0 7px; }
.share { width: 40px; margin-left: 6px; color: #66b5f5; font-size: 16.5px; }
.caret.s18 { margin: 0 5px 0 5px; }
.app-name { margin-left: 103px; font-size: 17.5px; width: 198px; white-space: nowrap; }
.doc-name { margin-left: 23px; font-size: 17.5px; width: 112px; white-space: nowrap; }
.tri-r { margin-left: 103px; width: 0; height: 0; border-top: 5px solid transparent; border-bottom: 5px solid transparent; border-left: 6px solid #cfcfcf; }
.search-cad { width: 270px; height: 30px; margin-left: 7px; padding-left: 7px; background: #3b4453; font: italic 15.5px/30px "Open Sans", sans-serif; color: #c9ced6; }
.tool { width: 24px; height: 24px; }
.binoc { width: 22px; height: 22px; margin: 0 8px 0 9px; }
.user { margin: 0 5px; }
.username { width: 94px; font-size: 17px; white-space: nowrap; }
.caret.m-user { margin-left: 33px; border-left-width: 4px; border-right-width: 4px; border-top-width: 5px; }
.cart { margin-left: 19px; }
.tri { margin-left: 11px; margin-right: 9px; }
.vsep { width: 1px; height: 26px; background: #7a8088; margin-left: 10px; }
.help { width: 24px; height: 24px; border-radius: 50%; background: #d5d5d5; color: #555; font: italic 700 18px/24px "Liberation Sans", sans-serif; text-align: center; margin-left: 15px; }
.caret.m-help { margin-left: 11px; border-left-width: 4px; border-right-width: 4px; border-top-width: 5px; }
.winctl { margin-left: auto; margin-right: 2px; display: flex; }
.winctl svg { width: 16px; height: 16px; margin: 0 26px; }

/* ribbon tabs */
.ribtabs { height: 30px; flex: none; position: relative; display: flex; align-items: stretch; padding-left: 10px; background: #212830; }
.rt { line-height: 30px; white-space: nowrap; text-align: center; }
.rt.on { width: 73px; background: #3b4453; }
.t-ins { width: 78px; } .t-ann { width: 98px; } .t-par { width: 116px; } .t-view { width: 60px; } .t-man { width: 102px; }
.t-out { width: 82px; } .t-add { width: 94px; } .t-col { width: 124px; } .t-exp { width: 130px; } .t-feat { width: 154px; }
.rt-more { width: 23px; height: 14px; background: #eee; margin: 8px 0 0 29px; display: flex; align-items: center; justify-content: center; }
.ribtabs .caret.s14 { margin: 13px 0 0 5px; }

/* ribbon */
.ribbon { height: 149px; flex: none; background: #3b4453; display: flex; }
.panel { position: relative; display: flex; flex-direction: column; padding-top: 4px; flex: none; }
.panel::after { content: ""; position: absolute; right: 0; top: 4px; bottom: 3px; width: 2px; background: #252c36; }
.p-draw { width: 333px; } .p-mod { width: 200px; } .p-ann { width: 219px; } .p-lay { width: 411px; }
.p-block { width: 120px; } .p-prop { width: 334px; } .p-grp { width: 104px; } .p-view { width: 142px; }
.p-view::after { display: none; }
.pbody { flex: 1; display: flex; padding: 8px 0 0 5px; min-height: 0; }
.p-mod .pbody, .p-lay .pbody, .p-ann .pbody, .p-block .pbody, .p-prop .pbody, .p-grp .pbody { padding-left: 0; }
.ptitle { height: 26px; display: flex; align-items: center; justify-content: center; gap: 8px; font-size: 16.5px; position: relative; }
.t-prop { padding-right: 12px; }
.ptitle-left { justify-content: flex-start; padding-left: 9px; gap: 10px; }
.launch { width: 10px; height: 10px; position: absolute; right: 6px; top: 9px; }
.ptitle-left .launch { position: static; margin-left: 2px; }

.big { display: flex; flex-direction: column; align-items: center; flex: none; }
.i48 { width: 48px; height: 48px; }
.i24 { width: 24px; height: 24px; }
.i20 { width: 20px; height: 20px; }
.lb { line-height: 24px; margin-top: 5px; white-space: nowrap; text-align: center; }
.lb.two { line-height: 26px; margin-top: 4px; }
.big > .caret { margin-top: 5px; }
.w52 { width: 52px; } .w54 { width: 54px; } .w62 { width: 62px; } .w64 { width: 64px; } .w68 { width: 68px; } .w70 { width: 70px; } .w72 { width: 72px; }
.w80 { width: 80px; } .w86 { width: 86px; } .w90 { width: 90px; } .w96 { width: 96px; }

.tools { display: grid; grid-auto-rows: 36px; align-items: center; justify-items: center; flex: none; margin-top: -4px; }
.cols-draw { grid-template-columns: 48px 4px; }
.cols-mod { grid-template-columns: 44px 45px 40px 10px 64px; margin-left: 2px; }
.cols-ann { grid-template-columns: 44px 10px; }
.cols-lay { grid-template-columns: 38px 38px 36px 36px 38px; grid-auto-rows: 36px; margin: 2px 0 0 -4px; }
.cols-block { grid-template-columns: 22px 28px; }
.cols-grp { grid-template-columns: 50px; }
.gactive { width: 35px; height: 31px; border: 2px solid #66b5f5; background: #2f4658; display: flex; align-items: center; justify-content: center; }

.lay-right { display: flex; flex-direction: column; }
.combo { display: flex; align-items: center; background: #4b566a; border: 2px solid #2a303b; height: 32px; }
.c-layer { width: 310px; margin-top: -3px; padding: 0 2px 0 5px; gap: 8px; }
.c-prop { width: 205px; padding: 0 5px; }
.swatch { width: 20px; height: 20px; background: #fff; border: 1px solid #bbb; margin: 0 2px; }
.swatch.sm { margin-right: 6px; }
.ztxt { margin-left: 2px; color: #d5d5d5; }
.ctxt { font-size: 16.5px; margin-left: 5px; }
.lnw { width: 95px; height: 2px; background: #fff; }
.prop-rows { display: flex; flex-direction: column; gap: 4px; margin-top: -3px; margin-left: 7px; }
.prow { display: flex; align-items: center; gap: 4px; }

.collapsed { width: 90px; height: 143px; margin: 4px 2px 0 0; background: #4b566a; border: 2px solid #2a303b; display: flex; flex-direction: column; align-items: center; flex: none; }
.c-util { margin-left: 2px; }
.ruler { width: 42px; height: 11px; margin-top: 23px; }
.clipico { width: 40px; height: 48px; margin-top: 5px; }
.c-util .lb { margin-top: 23px; }
.c-clip .lb { margin-top: 5px; }
.up-last { margin-top: auto; margin-bottom: 6px; }
.baseico { width: 48px; height: 36px; margin-top: 8px; }
.p-view .lb { margin-top: 11px; }

/* file tabs */
.filetabs { height: 40px; flex: none; display: flex; align-items: flex-end; position: relative; padding-left: 26px; }
.ham { width: 24px; height: 20px; }
.filetabs .ham { margin-bottom: 8px; }
.slash { width: 1px; height: 22px; background: #5a6270; transform: rotate(14deg); flex: none; }
.s-a { margin: 0 0 8px 20px; }
.ft { line-height: 36px; }
.ft:not(.on) { width: 60px; margin-left: 7px; padding-left: 11px; }
.ft.on { width: 157px; height: 36px; margin-left: 2px; padding-left: 21px; background: #3b4453; font-weight: 700; clip-path: polygon(9% 0, 100% 0, 91% 100%, 0 100%); display: flex; align-items: center; font-size: 16.5px; }
.x { color: #aab0b8; margin-left: 16px; font-size: 18px; }
.plus { width: 24px; height: 24px; }
.filetabs .plus { margin: 0 0 7px 8px; }
.s-b { margin: 0 0 8px 19px; }
.bar { height: 6px; background: #3b4453; flex: none; }

/* workspace */
.work { flex: 1; display: flex; min-height: 0; }
.palette { width: 333px; flex: none; background: #3b4453; display: flex; flex-direction: column; padding: 4px 7px 0 2px; }
.pal-title { height: 33px; line-height: 33px; background: #2e3542; padding-left: 23px; border-radius: 3px; font-size: 17.5px; white-space: nowrap; }
.pal-head { height: 30px; margin-top: 4px; background: #2e3542; border: 1px solid #272d38; border-radius: 3px; padding: 0 9px 0 13px; display: flex; align-items: center; justify-content: space-between; font-weight: 700; font-size: 16.5px; flex: none; }
.pal-list { height: 177px; margin-top: 3px; display: flex; overflow: hidden; flex: none; position: relative; }
.rows { flex: 1; overflow: hidden; display: flex; flex-direction: column; padding-top: 1px; min-width: 0; }
.frow { height: 28px; flex: none; display: flex; align-items: center; padding-left: 9px; white-space: nowrap; position: relative; }
.frow::before { content: ""; position: absolute; left: 15px; top: 0; bottom: 0; border-left: 1px dotted #aaa; }
.frow::after { content: ""; position: absolute; left: 21px; top: 14px; width: 9px; border-top: 1px dotted #aaa; }
.tree { width: 12px; height: 12px; background: #e8e8f0; color: #224; text-align: center; font: 14px/11px "Liberation Sans", sans-serif; position: relative; flex: none; }
.dwg { width: 24px; height: 18px; margin-left: 9px; }
.fn { margin-left: 6px; font-size: 17px; }
.scroll { width: 26px; flex: none; background: #f0f0f0; display: flex; flex-direction: column; align-items: center; padding: 11px 0 0; }
.chev { width: 12px; height: 8px; }
.thumb { width: 24px; height: 75px; background: #cdcdcd; margin-top: 20px; margin-bottom: 45px; }
.splitter { height: 16px; background: #2a303b; display: flex; align-items: center; justify-content: center; flex: none; border-radius: 3px; }
.sdots { width: 28px; border-top: 3px dotted #ddd; }
.splitter.s2 { height: 12px; margin-top: 2px; }
.pal-list + .splitter + .pal-head { margin-top: 0; }
.splitter.s2 + .pal-head { margin-top: 1px; }
.pal-body { background: #3b4453; border: 2px solid #2a303b; margin-top: 4px; flex: none; }
.b-det { height: 284px; }
.b-pre { height: 129px; }

/* canvas */
.canvas { flex: 1; position: relative; overflow: hidden; background: #212830; min-width: 0; }
.drawing { position: absolute; left: 0; top: 0; transform: rotate(180deg); }
.gl { stroke: #2a323e; fill: none; stroke-width: 1; }
.cad { stroke: #fff; fill: none; stroke-width: 1; }

.winbtns { position: absolute; left: 1625px; top: 14px; display: flex; gap: 11px; align-items: center; }
.wb { width: 18px; height: 14px; }
.vplabel { position: absolute; left: 5px; top: 10px; font-size: 17px; white-space: nowrap; color: #d8d8d8; }
.compass { position: absolute; left: 1555px; top: 52px; width: 140px; height: 140px; }
.compass .tt { font: 700 11px "Liberation Sans", sans-serif; fill: #333; text-anchor: middle; }
.compass .cd { font: 700 21px "Liberation Sans", sans-serif; fill: #a5a8ac; text-anchor: middle; }
.wcs { position: absolute; left: 1591px; top: 218px; width: 69px; height: 25px; background: #8d92a0; border: 2px solid #9ea3b0; border-radius: 4px; display: flex; align-items: center; justify-content: center; gap: 8px; font: 14px "Liberation Sans", sans-serif; color: #4a4e58; }
.navbar { position: absolute; left: 1665px; top: 276px; width: 46px; height: 312px; background: #5b6168; border: 1px solid #3e444c; border-radius: 3px; }

.hist { position: absolute; left: 451px; top: 641px; width: 556px; display: flex; flex-direction: column; gap: 8px; }
.hl { height: 23px; padding-left: 6px; border-radius: 3px; font: 18.3px/23px "Liberation Mono", monospace; white-space: nowrap; overflow: hidden; }
.hl.dim { background: #5a5d63; color: #b5b5b5; }
.hl.mid { background: #57595e; color: #d0d0d0; padding-left: 17px; }
.hl.hi { background: #565759; color: #f0f0f0; }

.cmd { position: absolute; left: 353px; top: 729px; width: 1006px; height: 40px; display: flex; align-items: center; }
.grip { width: 88px; height: 40px; background: #2b323e; border-radius: 0 0 0 6px; display: flex; align-items: center; padding-left: 14px; flex: none; }
.vdots { width: 0; height: 28px; border-left: 2px dotted #ddd; }
.cx { margin-left: 9px; font: 700 17px "Liberation Sans", sans-serif; color: #ccc; }
.wrench { width: 24px; height: 24px; margin-left: 15px; }
.input { flex: 1; height: 36px; background: #fff; border-radius: 2px 2px 0 0; display: flex; align-items: center; padding-left: 15px; color: #000; font: 18.3px/26px "Liberation Mono", monospace; white-space: nowrap; position: relative; }
.und { width: 14px; height: 1px; border-top: 1px dashed #66b5f5; margin-top: 10px; }
.input > .caret.gray { margin-left: 4px; border-left-width: 6px; border-right-width: 6px; border-top-width: 6px; }
.trim { margin-left: 10px; color: #111; font-weight: 700; }
.br { margin-left: 17px; }
.chip { background: #d2d2d2; border-radius: 5px; height: 26px; padding: 0 1.5px; margin-left: 6px; color: #222; }
.br + .chip { margin-left: 1px; }
.chip b { color: #1212e6; font-weight: 400; }
.chip + .br { margin-left: 1px; }
.caret.right-end { position: absolute; right: 12px; top: 15px; margin: 0; }

.cursor { position: absolute; left: 1024px; top: 658px; width: 9px; height: 9px; border: 1px solid #fff; }
.tip { position: absolute; left: 1052px; top: 688px; width: 429px; height: 36px; background: #999; border: 1px solid #111; color: #111; font-size: 17px; display: flex; align-items: center; justify-content: space-between; padding: 0 8px 0 7px; white-space: nowrap; }
.pin { width: 14px; height: 14px; }

/* layout bar */
.layoutbar { height: 44px; flex: none; display: flex; align-items: flex-start; padding-left: 26px; position: relative; }
.layoutbar > .ham { margin-top: 8px; }
.lt { line-height: 36px; white-space: nowrap; font-size: 17px; }
.lt.on { width: 104px; height: 36px; margin-left: 13px; padding-left: 24px; background: #3b4453; font-weight: 700; clip-path: polygon(14.400% 0, 100% 0, 88.500% 100%, 0 100%); }
.l1 { width: 70px; margin-left: 13px; }
.layoutbar .slash { margin-top: 8px; }
.s-c { margin-left: 12px; }
.l2 { width: 62px; margin-left: 13px; }
.s-d { margin-left: 9px; }
.l-plus { margin: 7px 0 0 31px; }
.s-e { margin-left: 19px; }
.status { margin-left: auto; display: flex; align-items: flex-start; margin-top: 4px; margin-right: 1px; height: 37px; }
.model { width: 72px; height: 37px; background: #3b4453; text-align: center; line-height: 37px; font-size: 15.5px; }
.sg { display: flex; height: 37px; background: #3b4453; margin-left: 6px; }
.sb { width: 35px; height: 37px; display: flex; align-items: center; justify-content: center; flex: none; }
.sb.on { background: #5b8abf; }
.sb.m2 { margin-left: 2px; }
.sb.n30 { width: 30px; }
.sb.n33 { width: 33px; }
.sc { width: 26px; display: flex; align-items: center; justify-content: center; flex: none; }
.sc.n20 { width: 20px; }
.sc .caret { border-left-width: 6px; border-right-width: 6px; border-top-width: 6px; }
.g1 { width: 96px; } .g2 { width: 156px; } .g3 { width: 96px; margin-left: 2px; } .g4 { width: 158px; } .g5 { width: 60px; } .g6 { width: 36px; }
.g6.tight { margin-left: 2px; }
.thin { width: 4px; margin-left: 4px; }
.g6.e { width: 35px; margin-left: 4px; }
.g7 { width: 37px; margin-left: 4px; align-items: center; justify-content: center; }
.ratio { font: 700 14px "Liberation Sans", sans-serif; color: #eee; }

/* taskbar */
.taskbar { height: 60px; flex: none; background: #474747; display: flex; align-items: stretch; padding: 0 7px 0 23px; border-right: 1px solid #aaa; }
.winlogo { width: 26px; height: 26px; align-self: center; }
.tsearch { width: 432px; margin-left: 23px; background: #f0f0f0; border: 2px solid #c4c4c4; border-width: 2px 2px 3px 2px; display: flex; align-items: center; color: #111; }
.mag { width: 24px; height: 24px; margin-left: 16px; }
.ts-text { margin-left: 19px; font-size: 21.4px; width: 196px; white-space: nowrap; }
.planets { width: 100px; height: 56px; margin-left: 64px; }
.tapp { width: 75px; display: flex; align-items: center; justify-content: center; flex: none; }
.tsearch + .tapp { margin-left: 4px; }
.ta { width: 36px; height: 36px; }
.tapp.on { background: #6a6a6a; border-bottom: 3px solid #a8cdf5; }
.store { width: 35px; height: 31px; background: #fff; border-radius: 3px; display: flex; align-items: center; justify-content: center; position: relative; }
.store::before { content: ""; position: absolute; left: 8px; top: -6px; width: 19px; height: 7px; border: 2px solid #29a8e8; border-bottom: 0; }
.ms { width: 16px; height: 16px; display: grid; grid-template-columns: 1fr 1fr; gap: 1px; }
.ms i { width: 100%; height: 100%; }
.r { background: #f25022; } .g { background: #7fba00; } .b { background: #00a4ef; } .y { background: #ffb900; }
.cadico { position: relative; width: 32px; height: 37px; background: #e5134f; display: block; box-shadow: 3px 0 0 #c44064 inset; }
.cadtop { position: absolute; left: 0; right: 0; bottom: 0; height: 10px; background: #7b0f34; font: 700 8px/10px "Liberation Sans", sans-serif; color: #fff; text-align: center; }
.logo-a.lg { left: 10px; top: 3px; font-size: 18px; }
.weather { width: 36px; height: 24px; align-self: center; margin-left: 405px; }
.wtxt { margin-left: 12px; width: 119px; font-size: 19px; line-height: 60px; white-space: nowrap; }
.tray { display: flex; align-items: center; margin-left: 30px; }
.tray > svg { width: 22px; height: 22px; margin: 0 13px; }
.eng { width: 52px; text-align: center; font-size: 16.5px; margin-left: 2px; }
.clock { width: 116px; display: flex; flex-direction: column; align-items: center; gap: 4px; font-size: 18px; }
.notif { width: 60px; position: relative; height: 40px; }
.notif svg { width: 28px; height: 30px; position: absolute; left: 14px; top: 6px; }
.badge { position: absolute; left: 27px; top: 19px; width: 20px; height: 20px; border-radius: 50%; background: #555; border: 1px solid #ccc; font: 700 14px/18px "Liberation Sans", sans-serif; text-align: center; color: #eee; }
```
